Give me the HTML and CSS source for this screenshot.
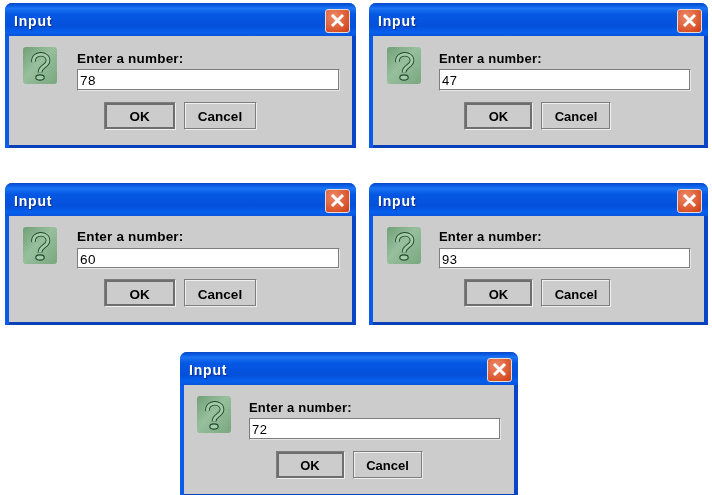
FILE: index.html
```html
<!DOCTYPE html>
<html lang="en">
<head>
  <meta charset="UTF-8">
  <meta name="viewport" content="width=device-width, initial-scale=1.0">
  <title>Input Dialogs</title>
  <link rel="stylesheet" href="styles.css">
</head>
<body>
  <svg class="defs" width="0" height="0">
    <defs>
      <linearGradient id="sheen" x1="0" y1="0" x2="1" y2="1">
        <stop offset="0" stop-color="#74a47b"/>
        <stop offset="0.45" stop-color="#9fc6a3"/>
        <stop offset="1" stop-color="#7dab83"/>
      </linearGradient>
      <pattern id="dither" width="2" height="2" patternUnits="userSpaceOnUse" patternTransform="rotate(45)">
        <rect width="2" height="1" fill="#3f6f48" fill-opacity="0.16"/>
      </pattern>
      <symbol id="question" viewBox="0 0 34 37">
        <rect width="34" height="37" rx="3" fill="url(#sheen)"/>
        <rect width="34" height="37" rx="3" fill="url(#dither)"/>
        <path d="M10.5 15 C9.5 5 25 5 25 13.5 C25 19.5 17 19 17 25.5" fill="none" stroke="#1f4a2a" stroke-width="4.6"/>
        <path d="M10.5 15 C9.5 5 25 5 25 13.5 C25 19.5 17 19 17 25.5" fill="none" stroke="#a6cbaa" stroke-width="2.8"/>
        <ellipse cx="17" cy="30.5" rx="4.2" ry="2.6" fill="#a6cbaa" stroke="#1f4a2a" stroke-width="1.1"/>
      </symbol>
      <symbol id="cross" viewBox="0 0 15 15">
        <path d="M2 2 L13 13 M13 2 L2 13" stroke="#fff" stroke-width="3"/>
      </symbol>
    </defs>
  </svg>

  <div class="sheet">
    <div class="row row-top">
      <div class="window size-large win-tall">
        <div class="titlebar"><span class="title">Input</span><span class="close"><svg class="cross"><use href="#cross"/></svg></span></div>
        <div class="body">
          <div class="content">
            <svg class="icon"><use href="#question"/></svg>
            <div class="main">
              <div class="label">Enter a number:</div>
              <div class="field">78</div>
            </div>
          </div>
          <div class="buttons"><div class="btn btn-ok">OK</div><div class="btn btn-cancel">Cancel</div></div>
        </div>
      </div>
      <div class="window size-small win-tall">
        <div class="titlebar"><span class="title">Input</span><span class="close"><svg class="cross"><use href="#cross"/></svg></span></div>
        <div class="body">
          <div class="content">
            <svg class="icon"><use href="#question"/></svg>
            <div class="main">
              <div class="label">Enter a number:</div>
              <div class="field">47</div>
            </div>
          </div>
          <div class="buttons"><div class="btn btn-ok">OK</div><div class="btn btn-cancel">Cancel</div></div>
        </div>
      </div>
    </div>

    <div class="row row-mid">
      <div class="window size-large win-short">
        <div class="titlebar"><span class="title">Input</span><span class="close"><svg class="cross"><use href="#cross"/></svg></span></div>
        <div class="body">
          <div class="content">
            <svg class="icon"><use href="#question"/></svg>
            <div class="main">
              <div class="label">Enter a number:</div>
              <div class="field">60</div>
            </div>
          </div>
          <div class="buttons"><div class="btn btn-ok">OK</div><div class="btn btn-cancel">Cancel</div></div>
        </div>
      </div>
      <div class="window size-small win-short">
        <div class="titlebar"><span class="title">Input</span><span class="close"><svg class="cross"><use href="#cross"/></svg></span></div>
        <div class="body">
          <div class="content">
            <svg class="icon"><use href="#question"/></svg>
            <div class="main">
              <div class="label">Enter a number:</div>
              <div class="field">93</div>
            </div>
          </div>
          <div class="buttons"><div class="btn btn-ok">OK</div><div class="btn btn-cancel">Cancel</div></div>
        </div>
      </div>
    </div>

    <div class="row row-last">
      <div class="window size-last win-tall">
        <div class="titlebar"><span class="title">Input</span><span class="close"><svg class="cross"><use href="#cross"/></svg></span></div>
        <div class="body">
          <div class="content">
            <svg class="icon"><use href="#question"/></svg>
            <div class="main">
              <div class="label">Enter a number:</div>
              <div class="field">72</div>
            </div>
          </div>
          <div class="buttons"><div class="btn btn-ok">OK</div><div class="btn btn-cancel">Cancel</div></div>
        </div>
      </div>
    </div>
  </div>
</body>
</html>
```

FILE: styles.css
```css
html, body {
  margin: 0;
  padding: 0;
  background: #fff;
  overflow: hidden;
}
body {
  font-family: "Liberation Sans", Arial, sans-serif;
  color: #000;
}
.defs {
  display: block;
  height: 0;
}
.sheet {
  width: 712px;
  height: 495px;
  padding: 3px 0 0 5px;
  box-sizing: border-box;
}
.row {
  display: flex;
  gap: 13px;
}
.row-mid {
  margin-top: 35px;
}
.row-last {
  margin-top: 27px;
  padding-left: 175px;
}
.window {
  box-sizing: border-box;
  display: flex;
  flex-direction: column;
  flex: none;
  background: #0a5ce8;
  border-radius: 7px 7px 0 0;
  filter: blur(0.5px);
}
.win-tall {
  height: 145px;
}
.win-short {
  height: 142px;
}
.size-large {
  width: 351px;
  --text-size: 13.5px;
  --button-width: 72px;
  --cancel-width: 73px;
  --icon-gap: 20px;
  --pad-right: 12px;
}
.size-small {
  width: 339px;
  --text-size: 13px;
  --button-width: 69px;
  --cancel-width: 70px;
  --icon-gap: 18px;
  --pad-right: 13px;
}
.size-last {
  width: 338px;
  --text-size: 13px;
  --button-width: 69px;
  --cancel-width: 70px;
  --icon-gap: 18px;
  --pad-right: 13px;
}
.titlebar {
  height: 33px;
  flex: none;
  display: flex;
  align-items: center;
  justify-content: space-between;
  padding: 2px 6px 0 9px;
  box-sizing: border-box;
  border-radius: 7px 7px 0 0;
  background: linear-gradient(to bottom, #0a47c4 0%, #0a5ce6 8%, #1c74f2 16%, #0558e4 34%, #0450da 70%, #0660ee 88%, #0a55dc 100%);
}
.title {
  color: #fff;
  font-size: 14px;
  font-weight: bold;
  letter-spacing: 0.8px;
  text-shadow: 1px 1px 1px #0a2f90;
}
.close {
  width: 25px;
  height: 24px;
  box-sizing: border-box;
  border: 1px solid #e6dcd8;
  border-radius: 3px;
  background: radial-gradient(circle at 35% 30%, #ec8a68, #d9532a 70%, #c43c16);
  display: flex;
  align-items: center;
  justify-content: center;
}
.cross {
  width: 15px;
  height: 15px;
}
.body {
  flex: 1;
  min-height: 0;
  margin-left: 4px;
  background: #cccccc;
  border-right: 4px solid #0a44c8;
  border-bottom: 3px solid #0a40b8;
  padding: 11px var(--pad-right) 0 14px;
  box-sizing: border-box;
}
.size-last .body {
  padding-left: 13px;
}
.content {
  display: flex;
}
.icon {
  width: 34px;
  height: 37px;
  flex: none;
  margin-right: var(--icon-gap);
}
.main {
  flex: 1;
  min-width: 0;
}
.label {
  font-size: var(--text-size);
  font-weight: bold;
  line-height: 16px;
  padding-top: 4px;
  margin-bottom: 2px;
  letter-spacing: 0.2px;
}
.win-short .label {
  padding-top: 2px;
  margin-bottom: 3px;
}
.field {
  height: 22px;
  box-sizing: border-box;
  background: #fff;
  border: 1px solid #7d7d7d;
  border-right-color: #e6e6e6;
  border-bottom-color: #e6e6e6;
  box-shadow: inset -1px -1px 0 #7d7d7d;
  font-size: var(--text-size);
  line-height: 22px;
  padding-left: 2px;
  letter-spacing: 0.5px;
}
.win-short .field {
  height: 21px;
  line-height: 21px;
}
.buttons {
  display: flex;
  justify-content: center;
  gap: 8px;
  margin-top: 11px;
  padding-right: 3px;
}
.size-last .buttons {
  padding-right: 0;
}
.win-short .buttons {
  margin-top: 10px;
}
.btn {
  height: 28px;
  box-sizing: border-box;
  font-size: var(--text-size);
  font-weight: bold;
  line-height: 28px;
  text-align: center;
  border: 1px solid #7d7d7d;
  border-right-color: #efefef;
  border-bottom-color: #efefef;
  box-shadow: inset -1px -1px 0 #7d7d7d, inset 1px 1px 0 #efefef;
}
.win-short .btn {
  line-height: 29px;
}
.btn-ok {
  width: var(--button-width);
  box-shadow: inset -2px -2px 0 #6e6e6e, inset 2px 2px 0 #6e6e6e;
}
.btn-cancel {
  width: var(--cancel-width);
}
```
